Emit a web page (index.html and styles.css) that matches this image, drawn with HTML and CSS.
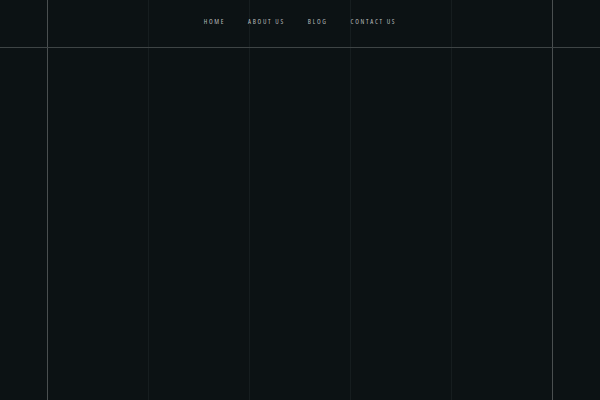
FILE: index.html
```html
<!DOCTYPE html>
<html>
<head>
<meta charset="utf-8">
<link rel="stylesheet" href="styles.css">
</head>
<body>
<div class="page">
  <div class="grid">
    <div class="col"></div>
    <div class="col"></div>
    <div class="col"></div>
    <div class="col"></div>
    <div class="col"></div>
  </div>
  <header class="header">
    <nav class="nav">
      <a class="nav-link" href="#">Home</a>
      <a class="nav-link" href="#">About us</a>
      <a class="nav-link" href="#">Blog</a>
      <a class="nav-link" href="#">Contact us</a>
    </nav>
  </header>
</div>
</body>
</html>
```
FILE: styles.css
```css
html, body {
  margin: 0;
  padding: 0;
  background: #0c1214;
  width: 600px;
  height: 400px;
  overflow: hidden;
}
.page {
  position: relative;
  width: 600px;
  height: 400px;
}
.grid {
  position: absolute;
  top: 0;
  bottom: 0;
  left: 47px;
  right: 47px;
  display: grid;
  grid-template-columns: repeat(5, 1fr);
  border-right: 1px solid #4a4f50;
}
.col {
  border-left: 1px solid #161d1f;
}
.col:first-child {
  border-left-color: #4a4f50;
}
.header {
  position: relative;
  height: 47px;
  border-bottom: 1px solid #3e4445;
  display: flex;
  justify-content: center;
  align-items: center;
}
.nav {
  display: flex;
  gap: 23px;
  margin-top: -5px;
}
.nav-link {
  font-family: "Open Sans", sans-serif;
  font-stretch: 75%;
  font-weight: 400;
  font-size: 6.7px;
  letter-spacing: 1.7px;
  text-transform: uppercase;
  color: #b8bcbc;
  text-decoration: none;
}
```
